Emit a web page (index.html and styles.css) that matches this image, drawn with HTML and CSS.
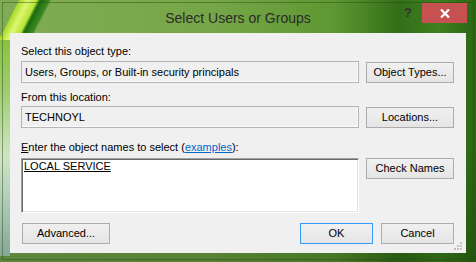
FILE: index.html
```html
<!DOCTYPE html>
<html lang="en">

<head>
    <meta charset="UTF-8">
    <title>Select Users or Groups</title>
    <link rel="stylesheet" href="styles.css">
</head>

<body>
    <div class="janela">
        <div class="barra-titulo">
            <span class="titulo">Select Users or Groups</span>
            <div class="controles">
                <span class="ajuda">?</span>
                <span class="fechar">
                    <svg width="10" height="9" viewBox="0 0 10 9">
                        <path d="M1 0.5 L9 8.5 M9 0.5 L1 8.5" stroke="#fff" stroke-width="2.2" fill="none"/>
                    </svg>
                </span>
            </div>
        </div>

        <div class="dialogo">
            <div class="rotulo">Select this object type:</div>
            <div class="linha">
                <div class="campo">Users, Groups, or Built-in security principals</div>
                <button class="botao">Object Types...</button>
            </div>

            <div class="rotulo rotulo-local">From this location:</div>
            <div class="linha linha-local">
                <div class="campo">TECHNOYL</div>
                <button class="botao">Locations...</button>
            </div>

            <div class="rotulo rotulo-nomes"><u>E</u>nter the object names to select (<a href="#" class="link">examples</a>):</div>
            <div class="linha linha-nomes">
                <div class="caixa-nomes"><u>LOCAL SERVICE</u></div>
                <button class="botao botao-check">Check Names</button>
            </div>

            <div class="rodape">
                <button class="botao botao-avancado">Advanced...</button>
                <div class="espaco"></div>
                <button class="botao botao-curto botao-ok">OK</button>
                <button class="botao botao-curto">Cancel</button>
            </div>

            <svg class="alca" width="9" height="9" viewBox="0 0 9 9">
                <rect x="6" y="0" width="2" height="2" fill="#c2c2c2"/>
                <rect x="3" y="3" width="2" height="2" fill="#c2c2c2"/>
                <rect x="6" y="3" width="2" height="2" fill="#c2c2c2"/>
                <rect x="0" y="6" width="2" height="2" fill="#c2c2c2"/>
                <rect x="3" y="6" width="2" height="2" fill="#c2c2c2"/>
                <rect x="6" y="6" width="2" height="2" fill="#c2c2c2"/>
            </svg>
        </div>
    </div>
</body>

</html>
```

FILE: styles.css
```css
body {
    margin: 0;
    padding: 0;
    font-family: 'Liberation Sans', Arial, sans-serif;
    font-size: 11px;
    color: #000;
}

.janela {
    width: 476px;
    height: 262px;
    display: flex;
    flex-direction: column;
    outline: 1px solid rgba(40, 70, 20, 0.45);
    outline-offset: -3px;
    background:
        linear-gradient(117deg, transparent 0 17px, #a6d624 17px, #dcf86e 25px, #b8e438 33px, #1d6a10 36px, #3b8a22 44px, transparent 46px) 0 0 / 70px 40px no-repeat,
        linear-gradient(180deg, #86c23e 0, #9fcd6e 25%, #cfe5c4 55%, #b7d2bc 70%, #86a898 100%) 0 36px / 10px 220px no-repeat,
        linear-gradient(180deg, rgba(0, 0, 0, 0) 0, rgba(0, 0, 0, 0) 55%, rgba(10, 40, 5, 0.3) 100%),
        linear-gradient(90deg, #80ac55 0%, #76a647 45%, #5e9832 70%, #336e18 84%, #3f801f 92%, #2c6614 100%);
}

.barra-titulo {
    display: grid;
    height: 33px;
}

.barra-titulo > * {
    grid-area: 1 / 1;
}

.titulo {
    padding-top: 10px;
    line-height: 17px;
    font-size: 14px;
    text-align: center;
    color: #2b2b2b;
}

.controles {
    justify-self: end;
    align-self: start;
    display: flex;
    align-items: center;
    gap: 10px;
    margin: 3px 9px 0 0;
}

.ajuda {
    font-size: 13px;
    font-weight: bold;
    color: #333;
    line-height: 20px;
}

.fechar {
    width: 45px;
    height: 20px;
    background-color: #c75050;
    display: flex;
    align-items: center;
    justify-content: center;
}

.dialogo {
    position: relative;
    margin: 0 10px;
    height: 220px;
    box-sizing: border-box;
    padding: 12px 12px 0 11px;
    background-color: #f0f0f0;
}

.rotulo {
    line-height: 13px;
}

.rotulo-local {
    margin-top: 8px;
}

.rotulo-nomes {
    margin-top: 13px;
}

.link {
    color: #0066cc;
}

.linha {
    display: grid;
    grid-template-columns: 338px 88px;
    column-gap: 7px;
    align-items: start;
    margin-top: 3px;
}

.linha-local {
    margin-top: 2px;
}

.linha-nomes {
    margin-top: 4px;
}

.campo {
    height: 22px;
    box-sizing: border-box;
    border: 1px solid #b5b5b5;
    box-shadow: inset -1px -1px 0 #fcfcfc;
    padding-left: 3px;
    display: flex;
    align-items: center;
    line-height: 13px;
}

.caixa-nomes {
    height: 55px;
    box-sizing: border-box;
    background-color: #fff;
    border: 1px solid;
    border-color: #a0a0a0 #fff #fff #a0a0a0;
    box-shadow: inset 1px 1px 0 #696969, inset -1px -1px 0 #e3e3e3;
    padding: 1px 0 0 2px;
    line-height: 13px;
}

.botao {
    height: 21px;
    margin-top: 1px;
    padding: 0;
    border: 1px solid #acacac;
    background: linear-gradient(#f0f0f0, #e5e5e5);
    font-family: 'Liberation Sans', Arial, sans-serif;
    font-size: 11px;
    color: #000;
    line-height: 13px;
}

.botao-check {
    margin-top: 0;
}

.rodape {
    display: flex;
    gap: 8px;
    margin-top: 10px;
}

.rodape .botao {
    margin-top: 0;
}

.botao-avancado {
    width: 88px;
    margin-left: 1px;
}

.espaco {
    flex: 1;
}

.botao-curto {
    width: 73px;
}

.botao-ok {
    border-color: #3399ff;
}

.alca {
    position: absolute;
    right: 3px;
    bottom: 2px;
}
```
